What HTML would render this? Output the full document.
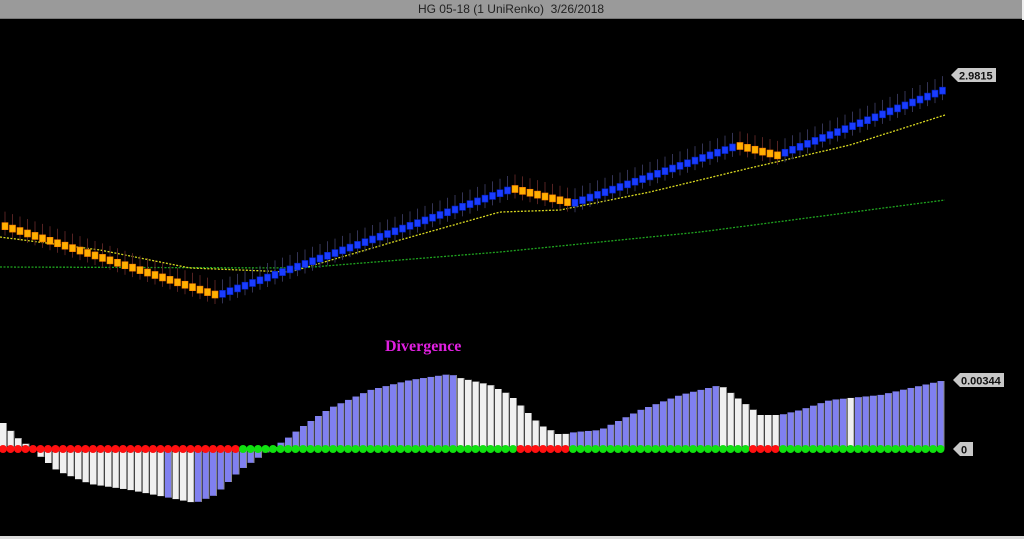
<!DOCTYPE html>
<html><head><meta charset="utf-8"><style>
html,body{margin:0;padding:0;background:#000;width:1024px;height:539px;overflow:hidden}
#t{position:absolute;left:0;top:0;width:1022px;height:18px;background:#9a9a9a;border-bottom:1px solid #777;font:12px "Liberation Sans",sans-serif;color:#222;text-align:center;line-height:18px;z-index:2}
#r{position:absolute;right:0;top:0;width:2px;height:20px;background:#eee;z-index:2}
svg{position:absolute;left:0;top:0}
</style></head><body>
<div id="t">HG 05-18 (1 UniRenko)&nbsp; 3/26/2018</div><div id="r"></div>
<svg id="s" width="1024" height="539" xmlns="http://www.w3.org/2000/svg"></svg>
<script>
(function(){
var s=document.getElementById('s'),h='';
function interp(k,x){for(var i=0;i<k.length-1;i++){if(x<=k[i+1][0]){var a=k[i],b=k[i+1];return a[1]+(b[1]-a[1])*(x-a[0])/(b[0]-a[0]);}}return k[k.length-1][1];}
var ma1=[[0,237],[100,250],[190,268],[290,272],[400,240],[500,212],[560,210],[650,192],[750,168],[850,145],[945,115]];
var ma2=[[0,267],[300,268],[500,252],[700,232],[945,200]];
function dl(k,c){var p='';for(var x=0;x<=945;x+=3)p+=(x?'L':'M')+x+' '+interp(k,x).toFixed(1);h+='<path d="'+p+'" stroke="'+c+'" stroke-width="1.3" fill="none" stroke-dasharray="2 1.5"/>';}
dl(ma2,'#1fa31f');dl(ma1,'#d8d820');
var pr=[[0,225],[215,295],[510,188],[570,203],[735,145],[775,155],[945,88]];
for(var x=2;x<=945;x+=7.5){var y=interp(pr,x);var up=(x>=215&&x<510)||(x>=570&&x<735)||x>=775;
 h+='<line x1="'+(x+3)+'" y1="'+(y-14)+'" x2="'+(x+3)+'" y2="'+(y+10)+'" stroke="'+(up?'#335':'#522')+'"/>';
 h+='<rect x="'+x+'" y="'+(y-3)+'" width="6" height="7" fill="'+(up?'#1a3cff':'#ffb000')+'" stroke="'+(up?'#0020c0':'#ff8000')+'" stroke-width=".6"/>';}
var hk=[[0,420],[8,428],[15,436],[23,442],[30,447],[38,455],[45,460],[53,468],[60,472],[90,484],[130,490],[160,496],[195,503],[215,495],[240,470],[262,455],[270,449],[285,440],[300,428],[330,408],[370,390],[410,380],[450,374],[460,378],[490,385],[510,395],[525,410],[540,425],[560,435],[575,432],[600,430],[640,410],[680,395],[720,385],[740,400],[760,415],[780,415],[800,410],[830,400],[850,398],[880,395],[945,380]];
function col(x){if(x<34)return'#f0f0f0';if(x<270){return((x>=166&&x<174)||x>=198)?'#8080f0':'#f0f0f0';}
 if(x<455)return'#8080f0';if(x<568)return'#f0f0f0';if(x<721)return'#8080f0';if(x<781)return'#f0f0f0';if(x>=848&&x<856)return'#f0f0f0';return'#8080f0';}
for(var x=0;x<=940;x+=7.5){var v=interp(hk,x+3),y0=449;var ty=Math.min(v,y0),ht=Math.abs(v-y0);
 h+='<rect x="'+x+'" y="'+ty+'" width="7" height="'+ht+'" fill="'+col(x+3)+'"/><rect x="'+(x+6)+'" y="'+ty+'" width="1" height="'+ht+'" fill="#888"/>';}
for(var x=3;x<=945;x+=7.5){var c=(x<237||(x>=520&&x<572)||(x>=752&&x<782))?'#ff1010':'#10e010';h+='<circle cx="'+x+'" cy="449" r="4" fill="'+c+'"/>';}
function lab(x,y,t,w){h+='<path d="M'+x+' '+y+' l7 -7 h'+w+' v14 h-'+w+'z" fill="#c8c8c8"/><text x="'+(x+8)+'" y="'+(y+4.5)+'" font-family="Liberation Sans,sans-serif" font-weight="bold" font-size="11" fill="#111">'+t+'</text>';}
lab(951,75,'2.9815',38);lab(953,380,'0.00344',44);lab(953,449,'0',13);
h+='<text x="385" y="351" font-family="Liberation Serif,serif" font-weight="bold" font-size="16" fill="#e020e0">Divergence</text>';
h+='<rect x="0" y="536" width="1024" height="3" fill="#ddd"/>';
s.innerHTML=h;
})();
</script>
</body></html>
